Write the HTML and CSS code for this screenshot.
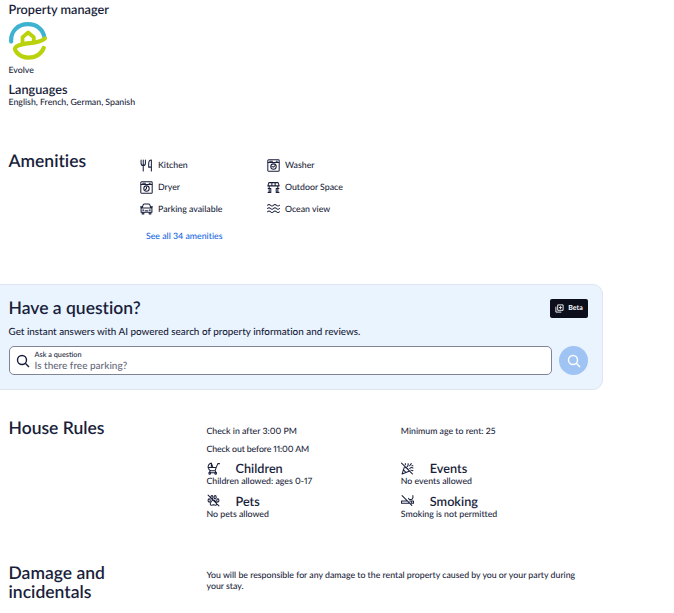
FILE: index.html
```html
<!DOCTYPE html>
<html lang="en">
<head>
<meta charset="utf-8">
<title>Property details</title>
<link rel="stylesheet" href="styles.css">
</head>
<body>
<section class="manager">
  <h3 class="manager-title"><span>Property manager</span></h3>
  <svg class="logo" viewBox="0 0 38 38" fill="none" stroke-linecap="round" stroke-linejoin="round">
    <path d="M2.200 19.500C1.500 9.500 8.500 2.200 19 2.200c8.700 0 15.200 5.200 16.500 13.600" stroke="#3eb3cf" stroke-width="4.200"/>
    <path d="M13.500 21.500v-6.300l5.700-4.700 5.600 4.700v4.300" stroke="#b9d20b" stroke-width="3.800"/>
    <path d="M35.800 16.500C29 23 16 19.500 7.500 24.500c-5 3 3.500 11 11.500 11.100 8.500.1 14-4.600 15.700-9.700" stroke="#b9d20b" stroke-width="4.200"/>
  </svg>
  <p class="manager-name"><span>Evolve</span></p>
  <h3 class="languages-title"><span>Languages</span></h3>
  <p class="small"><span>English, French, German, Spanish</span></p>
</section>

<section class="amenities">
  <h2><span>Amenities</span></h2>
  <div>
    <ul class="amenity-grid">
      <li><svg class="icon" viewBox="0 0 24 24"><path d="M2 2v6c0 3 1.500 4 4 4s4-1 4-4V2M6 2v20M21 22V2c-3 0-5 3-5 7v6h5"/></svg><span>Kitchen</span></li>
      <li><svg class="icon" viewBox="0 0 24 24"><rect x="1.500" y="1.500" width="21" height="21" rx="1.500"/><path d="M2 6.500h20M5 4h5M17 4h2M9 14l3 1 3-3"/><circle cx="12" cy="14" r="5"/></svg><span>Washer</span></li>
      <li><svg class="icon" viewBox="0 0 24 24"><rect x="1.500" y="1.500" width="21" height="21" rx="1.500"/><path d="M2 6.500h20M5 4h5M17 4h2M12 11v3l-2 2"/><circle cx="12" cy="14" r="5"/></svg><span>Dryer</span></li>
      <li><svg class="icon" viewBox="0 0 24 24"><path d="M1.500 9l2-6h17l2 6zM4 9v12M20 9v12M9 3v6M15 3v6M2 14h5v7M22 14h-5v7M2 21h5M17 21h5"/></svg><span>Outdoor Space</span></li>
      <li><svg class="icon" viewBox="0 0 24 24"><path d="M2 11h20v8H2zM4 11l2-6q.5-1.500 2-1.500h8q1.500 0 2 1.500l2 6M4 19v3h3v-3M17 19v3h3v-3M1 9h3M20 9h3M5 15h2M17 15h2M10 16h4"/></svg><span>Parking available</span></li>
      <li><svg class="icon" viewBox="0 0 24 24"><path d="M1 6q2.750-3 5.500 0t5.500 0 5.500 0 5.500 0M1 12q2.750-3 5.500 0t5.500 0 5.500 0 5.500 0M1 18q2.750-3 5.500 0t5.500 0 5.500 0 5.500 0"/></svg><span>Ocean view</span></li>
    </ul>
    <a class="see-all"><span>See all 34 amenities</span></a>
  </div>
</section>

<section class="question">
  <div class="question-head">
    <h2><span>Have a question?</span></h2>
    <div class="beta"><svg viewBox="0 0 10 10"><path d="M3 1h6v6H3zM1 3v6h6"/><path class="spark" d="M6 2l.6 1.400L8 4l-1.400.6L6 6l-.6-1.400L4 4l1.400-.6z"/></svg><span>Beta</span></div>
  </div>
  <p class="question-text"><span>Get instant answers with AI powered search of property information and reviews.</span></p>
  <div class="ask-row">
    <div class="ask-field">
      <svg class="search" viewBox="0 0 14 14"><circle cx="6" cy="6" r="4.500"/><path d="M9.300 9.300L13 13"/></svg>
      <div class="ask-copy"><div class="ask-label"><span>Ask a question</span></div><div class="ask-placeholder"><span>Is there free parking?</span></div></div>
    </div>
    <button class="ask-button" aria-label="Search"><svg class="search" viewBox="0 0 14 14"><circle cx="6" cy="6" r="4.500"/><path d="M9.300 9.300L13 13"/></svg></button>
  </div>
</section>

<section class="rules">
  <h2><span>House Rules</span></h2>
  <div class="rules-grid">
    <p><span>Check in after 3:00 PM</span></p><p><span>Minimum age to rent: 25</span></p>
    <p class="check-out"><span>Check out before 11:00 AM</span></p><p></p>
    <div class="rule"><h3><svg class="icon" viewBox="0 0 24 24"><path d="M2 10q0-6 6-8l3 8zM2 10h15l3-7h3M3 10q0 6 5 6h7l2-6M6 16l-2 4h13l-2-4M8 3v7"/><circle cx="5" cy="21" r="1.500"/><circle cx="16" cy="21" r="1.500"/></svg><span>Children</span></h3><p><span>Children allowed: ages 0-17</span></p></div>
    <div class="rule"><h3><svg class="icon" viewBox="0 0 24 24"><path d="M1 2l20 20M6 10L2 22l13-5M8 10q5 1 7 6M5 15l4 4M11 9q3-2 2-6M16 12q3-3 6-1M16 7l3-4M18 15l4 1M8 3v2M20 7h2"/></svg><span>Events</span></h3><p><span>No events allowed</span></p></div>
    <div class="rule"><h3><svg class="icon" viewBox="0 0 24 24"><path d="M2 2l20 20M12 11c-3 0-6 5-6 8 0 2 3 2 6 1 3 1 6 1 6-1 0-3-3-8-6-8z"/><ellipse cx="4" cy="12" rx="2" ry="3"/><ellipse cx="9" cy="6" rx="2" ry="3"/><ellipse cx="15" cy="6" rx="2" ry="3"/><ellipse cx="20" cy="12" rx="2" ry="3"/></svg><span>Pets</span></h3><p><span>No pets allowed</span></p></div>
    <div class="rule"><h3><svg class="icon" viewBox="0 0 24 24"><path d="M2 3l18 18M1 13h10M1 17h14M1 13v4M16 13h7v4h-4M19 13v3M22 3v4q0 3-3 3h-3q-2 0-2-2"/></svg><span>Smoking</span></h3><p><span>Smoking is not permitted</span></p></div>
  </div>
</section>

<section class="damage">
  <h2>Damage and incidentals</h2>
  <p><span>You will be responsible for any damage to the rental property caused by you or your party during</span><br><span>your stay.</span></p>
</section>
</body>
</html>
```
FILE: styles.css
```css
* { box-sizing: border-box; }
body {
  margin: 0;
  height: 613px;
  overflow: hidden;
  background: #fff;
  color: #191e3b;
  font: 500 8.75px/12px Lato, "Liberation Sans", sans-serif;
  font-variant-ligatures: none;
  font-variant-numeric: proportional-nums;
  text-rendering: geometricPrecision;
}
h2, h3, p, ul { margin: 0; padding: 0; }
h2 { font-size: 17.5px; line-height: 19px; font-weight: 600; }
h3 { font-size: 12.700px; line-height: 14px; font-weight: 600; }
svg { display: block; fill: none; stroke: currentColor; }
.icon { width: 13px; height: 13px; flex: none; stroke-width: 1.900; stroke-linejoin: round; stroke-linecap: round; }

.manager { height: 151px; padding: 3px 8.500px 0; }
.manager-title { margin-top: -1px; }
.logo { width: 38px; height: 38px; margin-top: 6px; stroke: none; }
.manager-name { margin-top: 4px; }
.languages-title { margin-top: 6px; }

.amenities { display: grid; grid-template-columns: 131.500px 1fr; height: 133px; padding-left: 8.500px; }
.amenity-grid { display: grid; grid-template-columns: 127px 127px; grid-auto-rows: 21.7px; list-style: none; margin-top: 3.500px; }
.amenity-grid li { display: flex; align-items: center; gap: 5px; }
.see-all { display: block; margin: 10.500px 0 0 6px; color: #1668e3; }

.question {
  width: 622.500px;
  height: 105.500px;
  margin-left: -20px;
  padding: 13.500px 13.500px 0 27.500px;
  border: 1px solid #dfe5f0;
  border-radius: 10px;
  background: #eaf4fe;
}
.question-head { display: flex; justify-content: space-between; }
.question-head h2 { margin-top: -0.500px; }
.beta { display: flex; align-items: center; justify-content: center; gap: 4px; width: 38px; height: 19px; border-radius: 2px; background: #0c0e1c; color: #fff; font-size: 7px; font-weight: 700; }
.beta svg { width: 9px; height: 9px; }
.beta .spark { fill: #fff; stroke: none; }
.question-text { margin-top: 7px; font-size: 9.880px; line-height: 14px; }
.ask-row { display: flex; gap: 7px; margin-top: 7.500px; }
.ask-field { display: flex; align-items: center; gap: 5px; width: 543.500px; height: 29px; padding-left: 6px; border: 1px solid #818494; border-radius: 5px; background: #fff; }
.search { width: 14px; height: 14px; stroke-width: 1.400; }
.ask-label { font-size: 7.3px; line-height: 11px; }
.ask-placeholder { font-size: 10px; line-height: 13px; color: #676a7d; }
.ask-button { display: grid; place-items: center; width: 29px; height: 29px; padding: 0; border: 0; border-radius: 50%; background: #9fc4f4; color: #fff; }

.rules { display: grid; grid-template-columns: 198px 1fr; height: 142.500px; padding: 28.500px 0 0 8.500px; }
.rules-grid { display: grid; grid-template-columns: 194.300px 180px; grid-template-rows: 18px 18px 32.500px 32.500px; margin-top: 7px; }
.check-out { letter-spacing: -0.120px; }
.rule h3 { display: flex; align-items: center; gap: 16px; }
.rule p { line-height: 11px; }

.damage { display: grid; grid-template-columns: 198px 1fr; padding: 30.500px 0 0 8.500px; }
.damage h2 { width: 120px; }
.damage p { margin-top: 6px; line-height: 11px; }
```
